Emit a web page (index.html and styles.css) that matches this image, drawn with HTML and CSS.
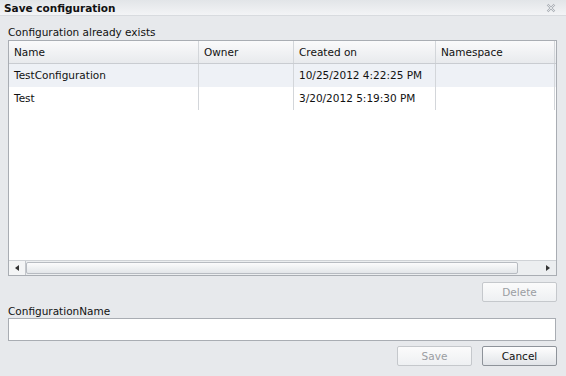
FILE: index.html
```html
<!DOCTYPE html>
<html lang="en">
<head>
  <meta charset="UTF-8" />
  <title>Save configuration</title>
  <link rel="stylesheet" href="styles.css">
</head>
<body>
  <div class="dialog">
    <div class="titlebar">
      <span class="title">Save configuration</span>
      <svg class="close" width="10" height="10" viewBox="0 0 10 10">
        <path d="M1.5 1.5 L8.5 8.5 M8.5 1.5 L1.5 8.5" stroke="#a9aeb5" stroke-width="2.2" fill="none"/>
        <path d="M1.5 1.5 L8.5 8.5 M8.5 1.5 L1.5 8.5" stroke="#f1f2f4" stroke-width="0.8" fill="none"/>
      </svg>
    </div>
    <div class="content">
      <div class="caption">Configuration already exists</div>
      <div class="grid">
        <div class="row head">
          <div class="cell c1">Name</div>
          <div class="cell c2">Owner</div>
          <div class="cell c3">Created on</div>
          <div class="cell c4">Namespace</div>
        </div>
        <div class="row sel">
          <div class="cell c1">TestConfiguration</div>
          <div class="cell c2"></div>
          <div class="cell c3">10/25/2012 4:22:25 PM</div>
          <div class="cell c4"></div>
        </div>
        <div class="row">
          <div class="cell c1">Test</div>
          <div class="cell c2"></div>
          <div class="cell c3">3/20/2012 5:19:30 PM</div>
          <div class="cell c4"></div>
        </div>
        <div class="filler"></div>
        <div class="hscroll">
          <div class="arrow left"><span></span></div>
          <div class="thumb"></div>
          <div class="arrow right"><span></span></div>
        </div>
      </div>
      <div class="actions top">
        <button disabled>Delete</button>
      </div>
      <label for="cfgname">ConfigurationName</label>
      <input type="text" id="cfgname" />
      <div class="actions">
        <button disabled>Save</button>
        <button>Cancel</button>
      </div>
    </div>
  </div>
</body>
</html>
```

FILE: styles.css
```css
body { margin: 0; font-family: "DejaVu Sans", Verdana, sans-serif; font-size: 10.5px; color: #111; background: #e7e9ec; }
.dialog { width: 566px; height: 376px; overflow: hidden; }
.titlebar { height: 15px; display: flex; align-items: center; justify-content: space-between; padding: 0 10px 0 4px; background: linear-gradient(#e2e5e8, #f3f4f6); border-bottom: 1px solid #d8dbdf; }
.title { font-weight: bold; font-size: 10.5px; color: #111; }
.close { display: block; }
.content { padding: 0 9px 0 8px; }
.caption { margin-top: 9px; height: 15px; line-height: 15px; }
.grid { height: 234px; border: 1px solid #a9adb3; background: #fff; display: flex; flex-direction: column; }
.row { display: flex; height: 23px; line-height: 23px; }
.head { background: linear-gradient(#fafafb, #e8eaed); border-bottom: 1px solid #c9ccd1; height: 22px; line-height: 22px; }
.sel { background: #eef1f6; }
.cell { padding-left: 5px; box-sizing: border-box; white-space: nowrap; overflow: hidden; }
.c1 { width: 190px; border-right: 1px solid #d3d6da; }
.c2 { width: 95px; border-right: 1px solid #d3d6da; }
.c3 { width: 142px; border-right: 1px solid #d3d6da; }
.c4 { width: 119px; border-right: 1px solid #d3d6da; }
.filler { flex: 1; }
.hscroll { height: 14px; display: flex; background: #eceef0; border-top: 1px solid #cfd2d6; }
.arrow { width: 16px; display: flex; align-items: center; justify-content: center; }
.arrow span { width: 0; height: 0; border-top: 3px solid transparent; border-bottom: 3px solid transparent; }
.arrow.left span { border-right: 4px solid #333; }
.arrow.right span { border-left: 4px solid #333; }
.arrow.left { border-right: 1px solid #c4c7cc; background: #f4f5f6; }
.thumb { width: 492px; margin: 1px 0; border: 1px solid #b7bbc1; border-radius: 2px; background: linear-gradient(#fbfbfc, #e3e6e9); box-sizing: border-box; }
.arrow.right { margin-left: auto; }
.actions { display: flex; justify-content: flex-end; gap: 10px; margin-top: 5px; }
.actions.top { margin-top: 6px; }
button { width: 75px; height: 20px; padding: 0; font-family: inherit; font-size: 10.5px; color: #111; border: 1px solid #8e939a; border-radius: 2px; background: linear-gradient(#fefefe, #e1e4e8); }
button:disabled { color: #9a9da2; border-color: #c5c8cc; background: linear-gradient(#fbfbfb, #eef0f2); }
label { display: block; margin-top: 2px; height: 14px; line-height: 14px; }
input { display: block; width: 548px; height: 23px; margin: 0; box-sizing: border-box; border: 1px solid #a9adb3; background: #fff; padding: 0 4px; font-family: inherit; font-size: 10.5px; }
```
